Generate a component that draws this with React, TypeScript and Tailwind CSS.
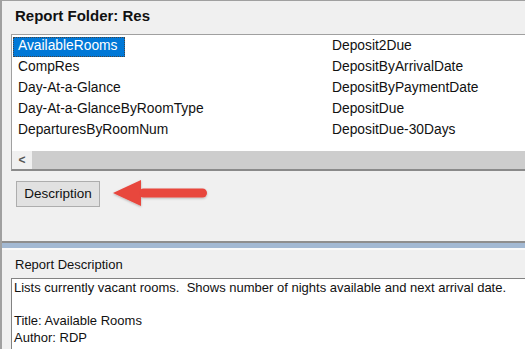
import React from "react";

const leftItems = [
  "AvailableRooms",
  "CompRes",
  "Day-At-a-Glance",
  "Day-At-a-GlanceByRoomType",
  "DeparturesByRoomNum",
];

const rightItems = [
  "Deposit2Due",
  "DepositByArrivalDate",
  "DepositByPaymentDate",
  "DepositDue",
  "DepositDue-30Days",
];

function Arrow() {
  return (
    <svg width="100" height="32" viewBox="0 0 100 32" className="ml-[12px]">
      <defs>
        <filter id="sh" x="-10%" y="-20%" width="120%" height="150%">
          <feDropShadow dx="0" dy="1" stdDeviation="1" floodColor="#000" floodOpacity="0.25" />
        </filter>
      </defs>
      <g filter="url(#sh)" fill="#e8463e">
        <path d="M1 15 L29 2 L29 28 Z" />
        <rect x="27" y="10.5" width="68" height="9" rx="4.5" />
      </g>
    </svg>
  );
}

export default function App() {
  return (
    <div
      className="w-[525px] h-[349px] overflow-hidden bg-[#f0f0f0] border-t border-l-2 border-[#a0a0a0] text-[#111]"
      style={{ fontFamily: '"Liberation Sans", Arial, sans-serif' }}
    >
      {/* top panel */}
      <div className="h-[240px] flex flex-col">
        <div className="h-[33px] pl-[13px] pt-[6px] text-[15px] font-bold leading-[18px]">
          Report Folder: Res
        </div>
        <div className="ml-[9px] w-[540px] h-[137px] border border-[#a0a0a0] border-b-2 border-b-[#8a8a8a] bg-white flex flex-col">
          <div className="flex-1 pt-[1px] flex text-[13.8px]">
            <div className="w-[320px] flex flex-col">
              {leftItems.map((t, i) => (
                <div key={t} className="h-[21px] flex items-center">
                  <span
                    className={
                      i === 0
                        ? "h-[20px] pl-[5px] pr-[8px] flex items-center bg-[#0078d7] text-white outline outline-1 outline-dotted outline-[#444] -outline-offset-1 ml-[1px]"
                        : "px-[6px]"
                    }
                  >
                    {t}
                  </span>
                </div>
              ))}
            </div>
            <div className="flex flex-col">
              {rightItems.map((t) => (
                <div key={t} className="h-[21px] flex items-center">
                  {t}
                </div>
              ))}
            </div>
          </div>
          <div className="h-[18px] flex bg-[#cdcdcd]">
            <div className="w-[20px] bg-[#f0f0f0] flex items-center justify-center text-[#555] text-[12px] font-bold">
              &lt;
            </div>
          </div>
        </div>
        <div className="pl-[14px] pt-[7px] flex items-center">
          <button className="w-[84px] h-[26px] border border-[#adadad] bg-[#e1e1e1] text-[13.5px] text-[#111]">
            Description
          </button>
          <Arrow />
        </div>
      </div>
      {/* splitter */}
      <div className="h-[2px] bg-[#8e8e8e]" />
      <div className="h-[5px] bg-[#a3b9d3]" />
      <div className="h-[2px] bg-[#fafafa]" />
      {/* bottom panel */}
      <div className="flex flex-col">
        <div className="h-[28px] pl-[13px] pt-[7px] text-[13px] leading-[16px]">Report Description</div>
        <div className="ml-[9px] w-[540px] h-[100px] border border-[#828282] bg-white pl-[2px] pt-[1px] text-[13px] leading-[16.5px]">
          <div>Lists currently vacant rooms.&nbsp; Shows number of nights available and next arrival date.</div>
          <div>&nbsp;</div>
          <div>Title: Available Rooms</div>
          <div>Author: RDP</div>
        </div>
      </div>
    </div>
  );
}
